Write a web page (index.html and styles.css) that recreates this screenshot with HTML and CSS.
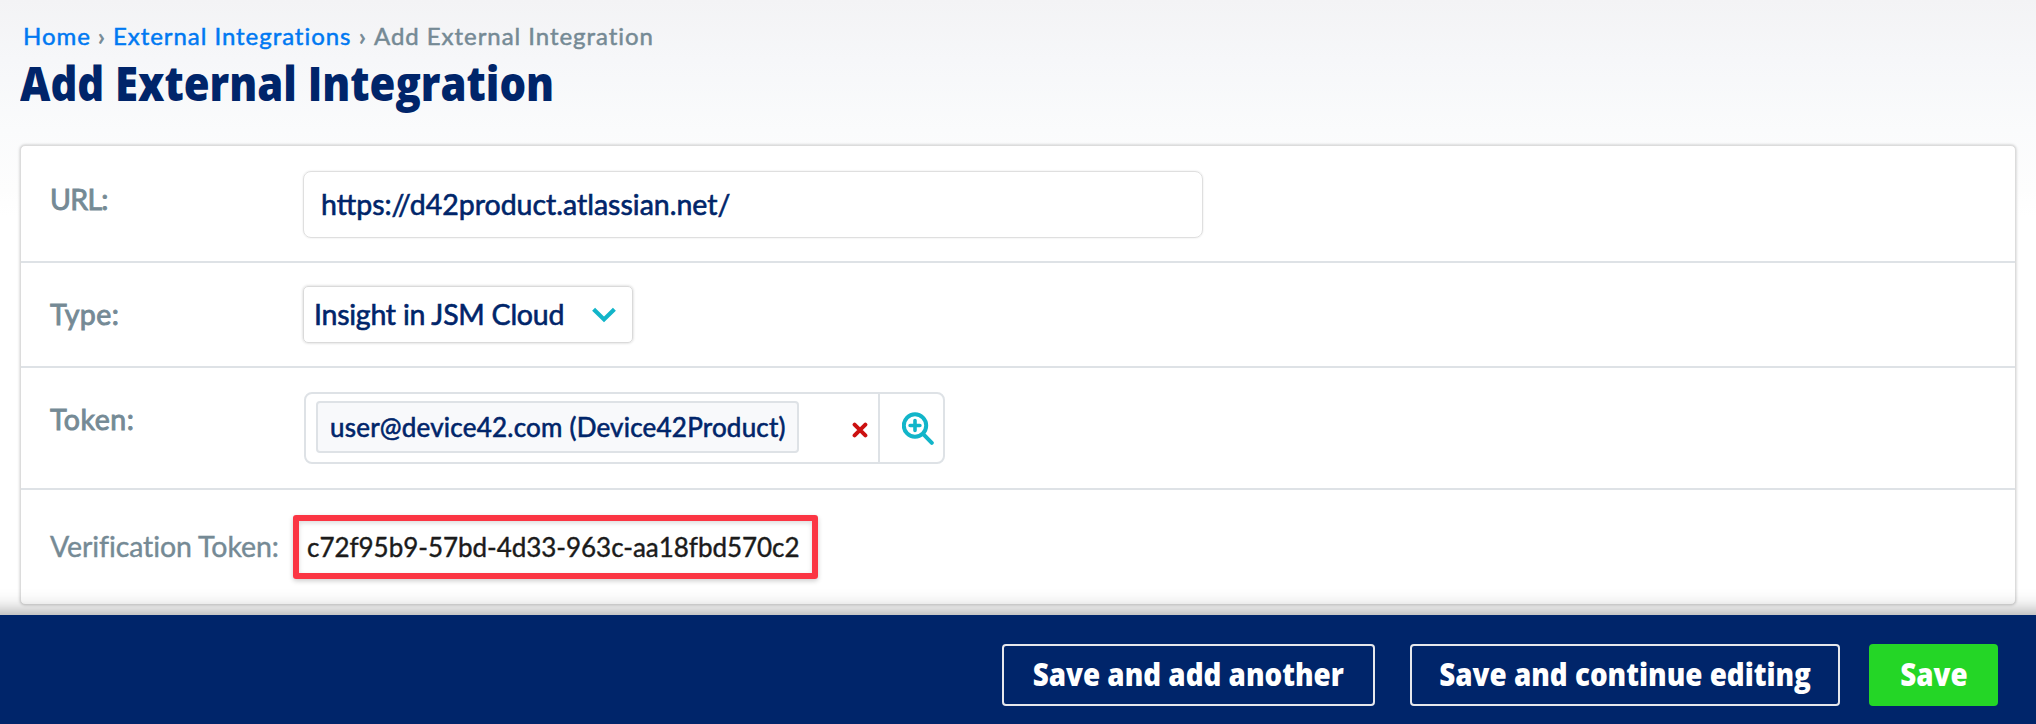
FILE: index.html
```
<!DOCTYPE html>
<html lang="en">
<head>
<meta charset="utf-8">
<title>Add External Integration</title>
<link rel="stylesheet" href="styles.css">
</head>
<body>
<div class="page">
  <header class="header">
    <nav class="crumbs">
      <a class="crumb crumb-home" href="#">Home</a>
      <span class="sep">›</span>
      <a class="crumb crumb-list" href="#">External Integrations</a>
      <span class="sep">›</span>
      <span class="crumb current">Add External Integration</span>
    </nav>
    <h1 class="title">Add External Integration</h1>
  </header>

  <main class="card">
    <div class="row row-url">
      <div class="label label-url">URL:</div>
      <div class="input">https://d42product.atlassian.net/</div>
    </div>
    <div class="row row-type">
      <div class="label label-type">Type:</div>
      <div class="select">
        <span class="select-text">Insight in JSM Cloud</span>
        <svg class="chevron" width="24" height="16" viewBox="0 0 24 16"><path d="M1.6 2.2 12 12.4 22.4 2.2" fill="none" stroke="#12b5c9" stroke-width="4.2"/></svg>
      </div>
    </div>
    <div class="row row-token">
      <div class="label label-token">Token:</div>
      <div class="picker">
        <div class="picker-main">
          <span class="chip">user@device42.com (Device42Product)</span>
          <svg class="remove" width="16" height="16" viewBox="0 0 16 16"><path d="M2.6 2.6 13.4 13.4M13.4 2.6 2.6 13.4" fill="none" stroke="#cc1111" stroke-width="4" stroke-linecap="round"/></svg>
        </div>
        <div class="picker-search">
          <svg class="lens" width="32" height="33" viewBox="0 0 32 33"><g fill="none" stroke="#12b5c9" stroke-linecap="round"><circle cx="13" cy="13.5" r="11.2" stroke-width="4"/><path d="M13 8.6V18.4M8.1 13.5H17.9" stroke-width="3.6"/><path d="M21.5 22.3 29.8 30.8" stroke-width="4"/></g></svg>
        </div>
      </div>
    </div>
    <div class="row row-verify">
      <div class="label label-verify">Verification Token:</div>
      <div class="highlight">c72f95b9-57bd-4d33-963c-aa18fbd570c2</div>
    </div>
  </main>

  <footer class="footer">
    <button class="btn another"><span class="btn-text">Save and add another</span></button>
    <button class="btn continue"><span class="btn-text">Save and continue editing</span></button>
    <button class="btn save"><span class="btn-text">Save</span></button>
  </footer>
</div>
</body>
</html>
```
FILE: styles.css
```
* { box-sizing: border-box; }
body {
  margin: 0;
  font-family: Lato, "Liberation Sans", sans-serif;
  color: #00256a;
  background: #fff;
}
.page {
  width: 2036px;
  height: 724px;
  overflow: hidden;
  display: flex;
  flex-direction: column;
  background: linear-gradient(#f3f3f5 0, #f6f7f9 60px, #fafbfc 130px, #fdfdfd 190px, #fff 216px);
}
.header {
  height: 145px;
  padding: 20px 20px 0;
}
.crumbs {
  display: flex;
  height: 32px;
  line-height: 32px;
  font-size: 24px;
  letter-spacing: 0.95px;
  white-space: nowrap;
  padding-left: 3px;
}
.crumb {
  color: #0079f2;
  text-decoration: none;
  -webkit-text-stroke: 0.5px currentColor;
}
.crumb-home { width: 75px; }
.crumb-list { width: 246px; }
.sep {
  width: 15px;
  color: #758a95;
  -webkit-text-stroke: 0.8px currentColor;
}
.current { color: #758a95; }
.title {
  margin: 0;
  line-height: 62px;
  font-family: "Open Sans", "Noto Sans", sans-serif;
  font-size: 48px;
  font-weight: 800;
  white-space: nowrap;
  transform: scaleX(0.872);
  transform-origin: 0 50%;
}
.card {
  margin: 0 20px;
  height: 460px;
  background: #fff;
  border: 1px solid #dcdcdc;
  border-radius: 5px;
  box-shadow: 0 0 3px rgba(0, 0, 0, 0.25);
}
.row {
  display: flex;
  align-items: flex-start;
  padding-left: 29px;
  border-bottom: 2px solid #dee2e6;
}
.row-url { height: 117px; }
.row-type { height: 105px; align-items: center; }
.row-token { height: 122px; }
.row-verify { height: 114px; align-items: center; border-bottom: 0; }
.label {
  width: 253px;
  line-height: 34px;
  font-size: 28.5px;
  color: #758a95;
  white-space: nowrap;
  -webkit-text-stroke: 0.9px currentColor;
}
.label-url { margin-top: 36px; letter-spacing: -0.7px; }
.label-type { padding-bottom: 2px; letter-spacing: 0.4px; }
.label-token { width: 254px; margin-top: 34px; letter-spacing: 0.5px; }
.label-verify {
  width: 243px;
  padding-bottom: 2px;
  letter-spacing: -0.1px;
  -webkit-text-stroke: 0.4px currentColor;
}
.input {
  width: 900px;
  height: 67px;
  margin-top: 25px;
  padding-left: 17px;
  line-height: 65px;
  font-size: 28.5px;
  -webkit-text-stroke: 0.6px currentColor;
  border: 1px solid #dfdfdf;
  border-radius: 8px;
  box-shadow: 0 0 2px rgba(0, 0, 0, 0.12);
}
.select {
  width: 330px;
  height: 57px;
  padding: 0 16px 0 10px;
  display: flex;
  align-items: center;
  justify-content: space-between;
  border: 1px solid #dadada;
  border-radius: 5px;
  box-shadow: 0 0 3px rgba(0, 0, 0, 0.2);
}
.select-text {
  padding-bottom: 2px;
  font-size: 28.5px;
  line-height: 34px;
  letter-spacing: -0.25px;
  white-space: nowrap;
  -webkit-text-stroke: 0.6px currentColor;
}
.picker {
  display: flex;
  width: 641px;
  height: 72px;
  margin-top: 24px;
  border: 2px solid #dee2e6;
  border-radius: 8px;
}
.picker-main {
  width: 574px;
  display: flex;
  align-items: flex-start;
  padding: 7px 10px 0;
  border-right: 2px solid #dee2e6;
}
.chip {
  width: 484px;
  height: 52px;
  padding-left: 12px;
  line-height: 49px;
  font-size: 26px;
  letter-spacing: 0.22px;
  white-space: nowrap;
  -webkit-text-stroke: 0.6px currentColor;
  background: #f8f9fb;
  border: 2px solid #dee2e6;
  border-radius: 4px;
}
.remove { margin: 21px 0 0 53px; }
.picker-search { padding: 18px 0 0 22px; }
.lens { display: block; }
.highlight {
  width: 525px;
  height: 64px;
  padding-left: 8px;
  line-height: 53px;
  font-size: 26px;
  letter-spacing: -0.03px;
  color: #1b1b1b;
  white-space: nowrap;
  -webkit-text-stroke: 0.4px currentColor;
  border: 6px solid #fb3543;
  border-radius: 3px;
  box-shadow: 0 2px 5px rgba(0, 0, 0, 0.2), inset 0 2px 5px rgba(0, 0, 0, 0.14);
}
.footer {
  height: 109px;
  margin: 10px -30px 0;
  padding: 29px 68px 0 0;
  display: flex;
  justify-content: flex-end;
  background: #00256a;
  box-shadow: 0 -2px 20px rgba(0, 0, 0, 0.4);
}
.btn {
  height: 62px;
  padding: 0 0 4px;
  display: flex;
  align-items: center;
  justify-content: center;
  color: #fff;
  background: none;
  border: 2px solid #e6e8ec;
  border-radius: 4px;
  font-family: "Open Sans", "Noto Sans", sans-serif;
  font-size: 32px;
  font-weight: 800;
  white-space: nowrap;
}
.btn-text { transform: scaleX(0.868); }
.another { width: 373px; margin-right: 35px; }
.continue { width: 430px; margin-right: 29px; }
.save { width: 129px; background: #24d626; border-color: #24d626; }
```
